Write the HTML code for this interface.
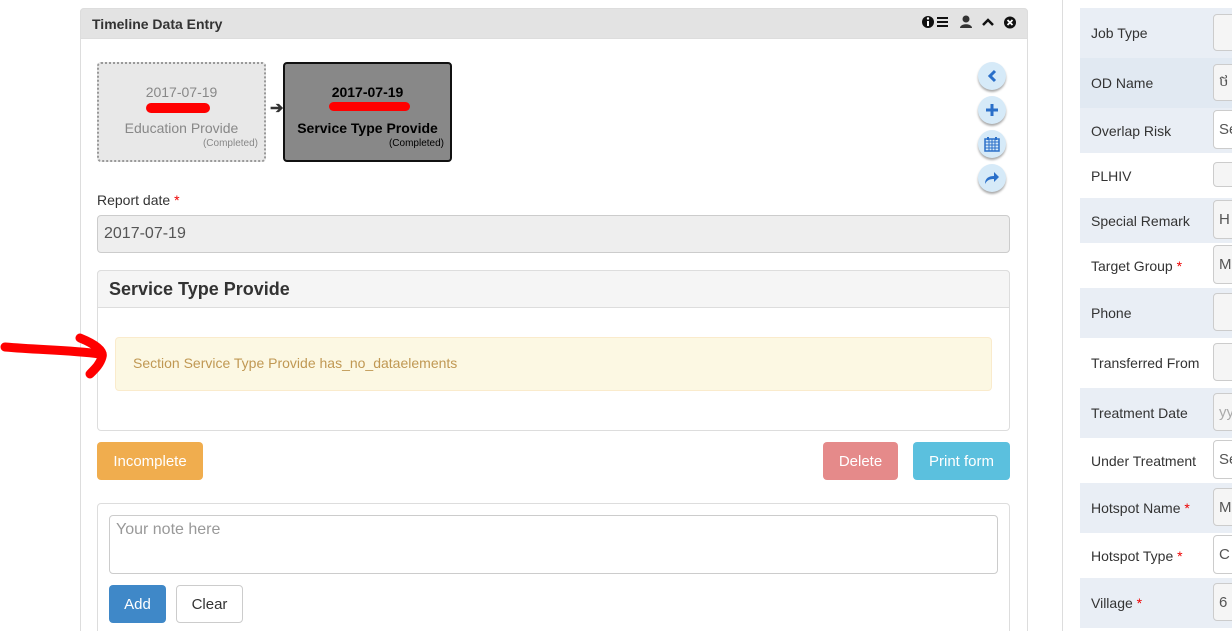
<!DOCTYPE html>
<html style="overflow:hidden;height:631px"><head><meta charset="utf-8"><style>
*{box-sizing:border-box}
body{margin:0;width:1232px;height:631px;overflow:hidden;background:#fff;font-family:"Liberation Sans",sans-serif;color:#333;position:relative}
.abs{position:absolute}
.panel{left:80px;top:8px;width:948px;height:630px;border:1px solid #ddd;border-radius:4px 4px 0 0}
.hdr{left:80px;top:8px;width:948px;height:31px;background:#e3e3e3;border:1px solid #ddd;border-radius:4px 4px 0 0;font-weight:bold;font-size:14px;padding:7px 11px;color:#333}
.ev{font-size:14px;text-align:center;border-radius:4px}
.circ{width:28px;height:28px;border-radius:50%;background:#d6eaf8;box-shadow:0 2px 2px #aaa;left:978px;display:flex;align-items:center;justify-content:center}
.rp{left:1062px;top:0;width:1px;height:631px;background:#ddd}
.row{left:1080px;width:152px;font-size:14px;color:#333;padding-left:11px;display:flex;align-items:center}
.row.s{background:#e9eef5}
.inp{position:absolute;left:133px;width:30px;border:1px solid #ccc;border-radius:4px;background:#f5f5f5;font-size:15px;padding-left:5px;display:flex;align-items:center;color:#555}
.req{color:#e00}
.btn{font-size:15px;color:#fff;border-radius:4px;display:flex;align-items:center;justify-content:center}
</style></head><body>
<div class="abs panel"></div>
<div class="abs hdr">Timeline Data Entry</div>
<svg class="abs" style="left:922px;top:15px" width="96" height="16">
<circle cx="6" cy="7" r="6" fill="#111"/><rect x="5" y="6" width="2" height="5" fill="#fff"/><circle cx="6" cy="3.5" r="1.2" fill="#fff"/>
<path d="M15 3h11M15 7h11M15 11h11" stroke="#111" stroke-width="2"/>
<circle cx="44" cy="4" r="3.5" fill="#333"/><path d="M38 13c0-5 12-5 12 0z" fill="#333"/>
<path d="M61 10l5-5 5 5" stroke="#111" stroke-width="2.5" fill="none"/>
<circle cx="88" cy="7.5" r="6" fill="#111"/><path d="M85.5 5l5 5M90.5 5l-5 5" stroke="#fff" stroke-width="1.8"/>
</svg>

<div class="abs ev" style="left:97px;top:62px;width:169px;height:100px;background:#e8e8e8;border:2px dotted #999;color:#888;padding-top:19px;line-height:18px">2017-07-19<br>&nbsp;<br>Education Provide<div style="font-size:10px;text-align:right;padding-right:6px;line-height:14px">(Completed)</div></div>
<div class="abs" style="left:146px;top:103px;width:64px;height:10px;background:#f00;border-radius:6px"></div>
<div class="abs" style="left:270px;top:98px;font-size:16px;font-weight:bold;color:#333">➔</div>
<div class="abs ev" style="left:283px;top:62px;width:169px;height:100px;background:#888;border:2px solid #111;color:#000;font-weight:bold;padding-top:19px;line-height:18px">2017-07-19<br>&nbsp;<br>Service Type Provide<div style="font-size:10px;text-align:right;padding-right:6px;line-height:14px;font-weight:normal">(Completed)</div></div>
<div class="abs" style="left:329px;top:102px;width:81px;height:9px;background:#f00;border-radius:6px"></div>

<div class="abs circ" style="top:62px"><svg width="12" height="14"><path d="M9 2L4 7l5 5" stroke="#2a6fc9" stroke-width="3" fill="none"/></svg></div>
<div class="abs circ" style="top:96px"><svg width="14" height="14"><path d="M7 1v12M1 7h12" stroke="#2a6fc9" stroke-width="3"/></svg></div>
<div class="abs circ" style="top:130px"><svg width="16" height="16"><rect x="1" y="3" width="14" height="12" fill="none" stroke="#2a6fc9" stroke-width="1.5"/><path d="M1 6h14M1 9h14M1 12h14M5 3v12M8 3v12M11 3v12" stroke="#2a6fc9"/><path d="M4 1v3M12 1v3" stroke="#2a6fc9" stroke-width="2"/></svg></div>
<div class="abs circ" style="top:164px"><svg width="16" height="14"><path d="M1 13C1 7 5 5 10 5V1l5 5-5 5V8C6 8 3 9 1 13z" fill="#2a6fc9"/></svg></div>

<div class="abs" style="left:97px;top:192px;font-size:14px">Report date <span class="req">*</span></div>
<div class="abs" style="left:97px;top:215px;width:913px;height:38px;background:#eee;border:1px solid #ccc;border-radius:4px;font-size:16px;color:#555;padding:9px 6px">2017-07-19</div>

<div class="abs" style="left:97px;top:270px;width:913px;height:161px;border:1px solid #ddd;border-radius:4px"></div>
<div class="abs" style="left:97px;top:270px;width:913px;height:38px;background:#f5f5f5;border:1px solid #ddd;border-radius:4px 4px 0 0;font-size:18px;font-weight:bold;padding:8px 11px;color:#333">Service Type Provide</div>
<div class="abs" style="left:115px;top:337px;width:877px;height:54px;background:#fcf8e3;border:1px solid #faebcc;border-radius:4px;color:#c09853;font-size:14px;padding:17px 17px">Section Service Type Provide has_no_dataelements</div>
<svg class="abs" style="left:0;top:330px" width="115" height="50"><path d="M5 17C40 20 70 20 100 24M80 8C95 14 104 21 102 27C100 34 96 38 90 44" stroke="#f00" stroke-width="9" fill="none" stroke-linecap="round"/></svg>

<div class="abs btn" style="left:97px;top:442px;width:106px;height:38px;background:#f0ad4e">Incomplete</div>
<div class="abs btn" style="left:823px;top:442px;width:75px;height:38px;background:#e58a8a">Delete</div>
<div class="abs btn" style="left:913px;top:442px;width:97px;height:38px;background:#5bc0de">Print form</div>

<div class="abs" style="left:97px;top:503px;width:913px;height:140px;border:1px solid #ddd;border-radius:4px"></div>
<div class="abs" style="left:109px;top:515px;width:889px;height:59px;border:1px solid #ccc;border-radius:4px;font-size:16px;color:#999;padding:5px 6px">Your note here</div>
<div class="abs btn" style="left:109px;top:585px;width:57px;height:38px;background:#3f88c8">Add</div>
<div class="abs btn" style="left:176px;top:585px;width:67px;height:38px;border:1px solid #ccc;color:#333;background:#fff">Clear</div>

<div class="abs rp"></div>
<div class="abs row s" style="top:8px;height:50px">Job Type<div class="inp" style="top:6px;height:37px"></div></div>
<div class="abs row s" style="top:58px;height:50px;background:#e1e9f2">OD Name<div class="inp" style="top:6px;height:37px">ថ</div></div>
<div class="abs row s" style="top:108px;height:45px">Overlap Risk<div class="inp" style="top:2px;height:39px;background:#fff">Se</div></div>
<div class="abs row" style="top:153px;height:45px">PLHIV<div class="inp" style="top:9px;height:25px"></div></div>
<div class="abs row s" style="top:198px;height:45px">Special Remark<div class="inp" style="top:2px;height:39px">H</div></div>
<div class="abs row" style="top:243px;height:45px">Target Group&nbsp;<span class="req">*</span><div class="inp" style="top:2px;height:39px">M</div></div>
<div class="abs row s" style="top:288px;height:50px">Phone<div class="inp" style="top:5px;height:38px"></div></div>
<div class="abs row" style="top:338px;height:50px">Transferred From<div class="inp" style="top:5px;height:38px"></div></div>
<div class="abs row s" style="top:388px;height:50px">Treatment Date<div class="inp" style="top:5px;height:38px;color:#aaa">yy</div></div>
<div class="abs row" style="top:438px;height:45px">Under Treatment<div class="inp" style="top:2px;height:39px;background:#fff">Se</div></div>
<div class="abs row s" style="top:483px;height:50px">Hotspot Name&nbsp;<span class="req">*</span><div class="inp" style="top:5px;height:38px">M</div></div>
<div class="abs row" style="top:533px;height:45px">Hotspot Type&nbsp;<span class="req">*</span><div class="inp" style="top:2px;height:39px;background:#fff">C</div></div>
<div class="abs row s" style="top:578px;height:50px">Village&nbsp;<span class="req">*</span><div class="inp" style="top:5px;height:38px">6</div></div>
</body></html>
